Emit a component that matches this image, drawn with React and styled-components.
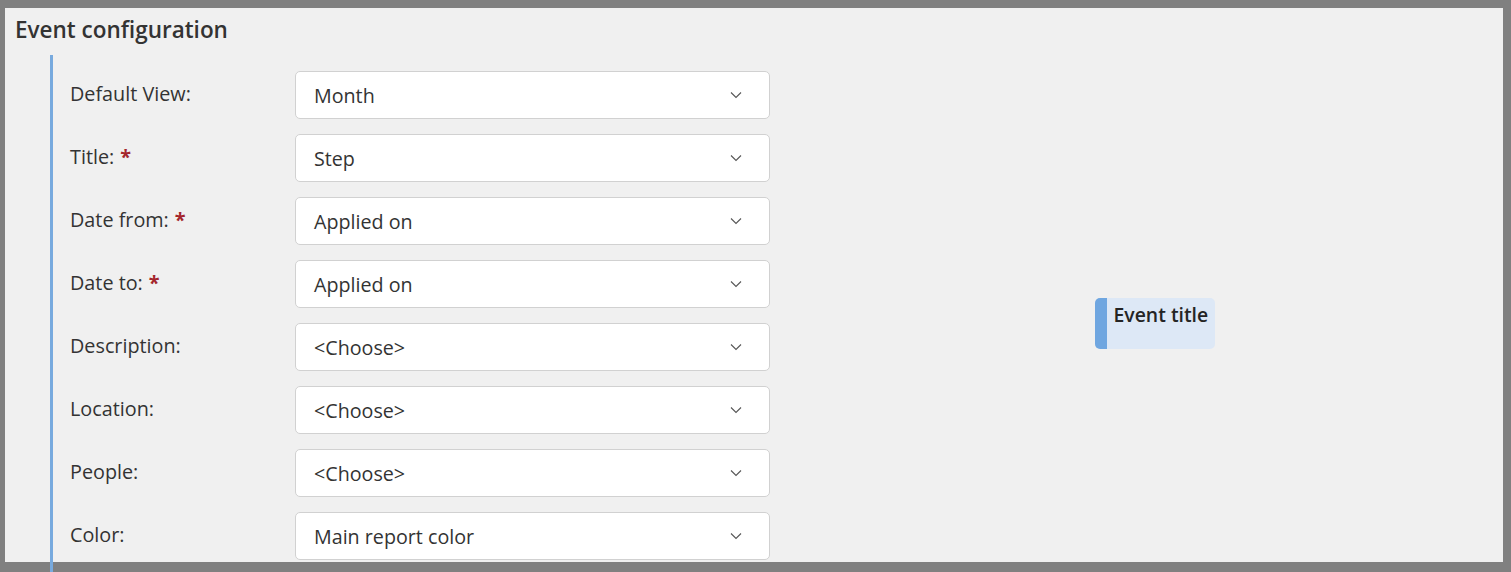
import React from "react";
import styled, { createGlobalStyle } from "styled-components";

const GlobalStyle = createGlobalStyle`
  html, body {
    margin: 0;
    padding: 0;
    background: #808080;
    overflow: hidden;
  }
  body {
    font-family: "Open Sans", "Noto Sans", sans-serif;
    color: #333;
  }
`;

const Frame = styled.div`
  box-sizing: border-box;
  width: 1511px;
  height: 572px;
  border-style: solid;
  border-color: #808080;
  border-width: 8px 8px 10px 5px;
  background: #f0f0f0;
`;

const Heading = styled.h2`
  margin: 0;
  padding: 8px 10px 0;
  font-size: 22.5px;
  font-weight: 600;
  line-height: 28px;
  color: #333;
`;

const Body = styled.div`
  display: flex;
  margin-top: 11px;
`;

const Section = styled.div`
  margin-left: 45px;
  border-left: 3px solid #78aade;
  padding: 16px 0 20px 17px;
  display: flex;
  flex-direction: column;
  gap: 15px;
`;

const Row = styled.div`
  display: flex;
  align-items: flex-start;
`;

const Label = styled.div`
  width: 225px;
  padding-top: 10px;
  font-size: 19.8px;
  line-height: 26px;
  color: #333;
`;

const Required = styled.span`
  color: #a4262c;
  font-weight: 700;
  margin-left: 6px;
`;

const Select = styled.div`
  box-sizing: border-box;
  width: 475px;
  height: 48px;
  display: flex;
  align-items: center;
  justify-content: space-between;
  padding: 0 27px 0 18px;
  background: #fff;
  border: 1px solid #d1d1d1;
  border-radius: 5px;
  font-size: 19.7px;
  color: #333;
`;

const Preview = styled.div`
  flex: 1;
  display: flex;
  justify-content: center;
  align-items: flex-start;
  padding: 243px 0 0 36px;
`;

const EventCard = styled.div`
  display: flex;
  width: 120px;
  height: 51px;
  border-radius: 5px;
  overflow: hidden;
  background: #dde8f6;
`;

const EventBar = styled.div`
  width: 12px;
  background: #6fa6e0;
`;

const EventTitle = styled.div`
  padding: 4px 0 0 7px;
  font-size: 19.4px;
  font-weight: 600;
  line-height: 26px;
  color: #242424;
  white-space: nowrap;
`;

const Chevron = () => (
  <svg width="12" height="8" viewBox="0 0 12 8" fill="none">
    <path d="M1 1.5l5 5 5-5" stroke="#555" strokeWidth="1.1" />
  </svg>
);

const fields = [
  { label: "Default View:", value: "Month" },
  { label: "Title:", value: "Step", required: true },
  { label: "Date from:", value: "Applied on", required: true },
  { label: "Date to:", value: "Applied on", required: true },
  { label: "Description:", value: "<Choose>" },
  { label: "Location:", value: "<Choose>" },
  { label: "People:", value: "<Choose>" },
  { label: "Color:", value: "Main report color" },
];

const App = () => (
  <>
    <GlobalStyle />
    <Frame>
      <Heading>Event configuration</Heading>
      <Body>
        <Section>
          {fields.map(({ label, value, required }) => (
            <Row key={label}>
              <Label>
                {label}
                {required && <Required>*</Required>}
              </Label>
              <Select>
                <span>{value}</span>
                <Chevron />
              </Select>
            </Row>
          ))}
        </Section>
        <Preview>
          <EventCard>
            <EventBar />
            <EventTitle>Event title</EventTitle>
          </EventCard>
        </Preview>
      </Body>
    </Frame>
  </>
);

export default App;
